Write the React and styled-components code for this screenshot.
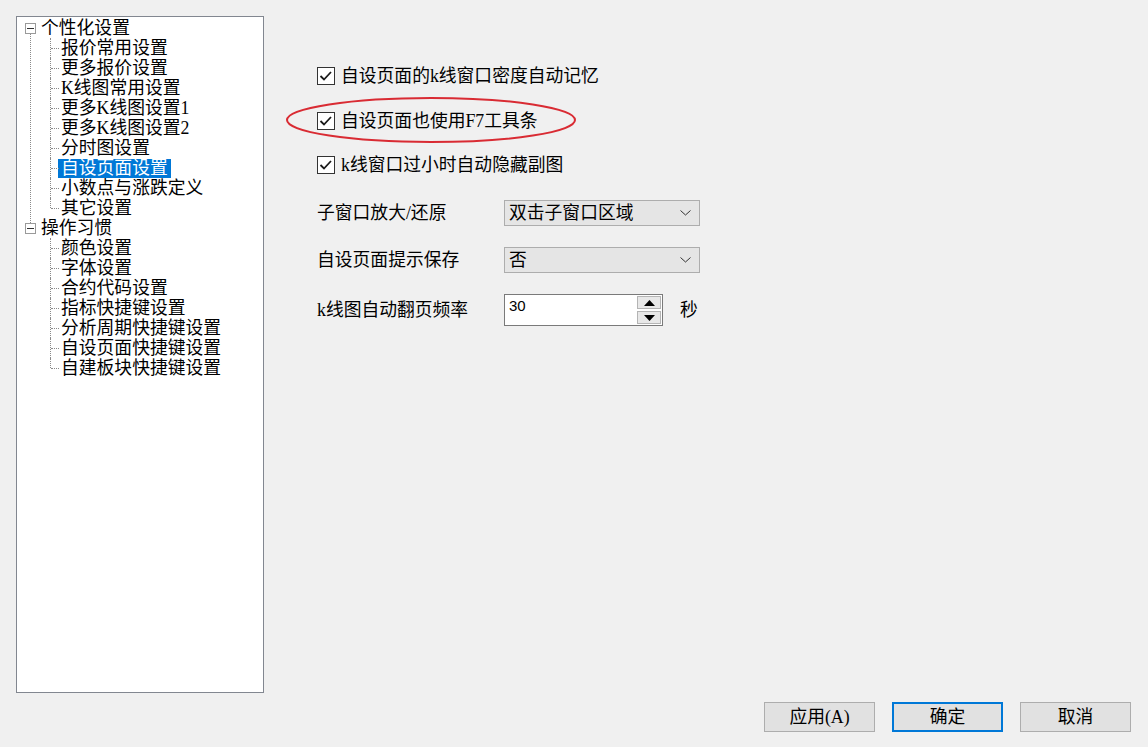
import React from "react";
import styled, { createGlobalStyle } from "styled-components";

const FONT = `"Liberation Serif", "Noto Sans CJK SC", serif`;

const GlobalStyle = createGlobalStyle`
  html, body {
    margin: 0;
    padding: 0;
    background: #f0f0f0;
  }
  * {
    box-sizing: border-box;
  }
`;

const groups = [
  {
    label: "个性化设置",
    children: [
      "报价常用设置",
      "更多报价设置",
      "K线图常用设置",
      "更多K线图设置1",
      "更多K线图设置2",
      "分时图设置",
      "自设页面设置",
      "小数点与涨跌定义",
      "其它设置",
    ],
  },
  {
    label: "操作习惯",
    children: [
      "颜色设置",
      "字体设置",
      "合约代码设置",
      "指标快捷键设置",
      "分析周期快捷键设置",
      "自设页面快捷键设置",
      "自建板块快捷键设置",
    ],
  },
];

const checks = [
  { label: "自设页面的k线窗口密度自动记忆", height: 44 },
  { label: "自设页面也使用F7工具条", height: 45, marked: true },
  { label: "k线窗口过小时自动隐藏副图", height: 44 },
];

const CheckMark = () => (
  <svg width="16" height="16" viewBox="0 0 16 16">
    <polyline
      points="2.5,8 6,11.5 13,4"
      fill="none"
      stroke="#1a1a1a"
      strokeWidth="1.8"
    />
  </svg>
);

const Chevron = () => (
  <svg width="11" height="6" viewBox="0 0 11 6">
    <polyline points="0.5,0.5 5.5,5 10.5,0.5" fill="none" stroke="#333" strokeWidth="1" />
  </svg>
);

const Tri = ({ up }) => (
  <svg width="11" height="6" viewBox="0 0 11 6">
    <polygon points={up ? "0,6 11,6 5.5,0" : "0,0 11,0 5.5,6"} fill="#000" />
  </svg>
);

const App = () => {
  const selected = "自设页面设置";
  return (
    <Window>
      <GlobalStyle />
      <Main>
        <TreePanel>
          <TreeList>
            {groups.map((g) => (
              <RootNode key={g.label}>
                <RootRow>
                  <Expander />
                  <RootLabel>{g.label}</RootLabel>
                </RootRow>
                <ChildList>
                  {g.children.map((c) => (
                    <ChildItem key={c}>
                      <ItemLabel $active={c === selected}>{c}</ItemLabel>
                    </ChildItem>
                  ))}
                </ChildList>
              </RootNode>
            ))}
          </TreeList>
        </TreePanel>
        <Content>
          <CheckGroup>
            {checks.map((c) => (
              <CheckRow key={c.label} $h={c.height}>
                {c.marked && (
                  <Ellipse width="292" height="48" viewBox="0 0 292 48">
                    <ellipse cx="146" cy="24" rx="144" ry="22" fill="none" stroke="#d92b33" strokeWidth="2" />
                  </Ellipse>
                )}
                <Box>
                  <CheckMark />
                </Box>
                <CheckText>{c.label}</CheckText>
              </CheckRow>
            ))}
          </CheckGroup>
          <FormGrid>
            <FieldLabel>子窗口放大/还原</FieldLabel>
            <Select>
              <span>双击子窗口区域</span>
              <Chevron />
            </Select>
            <FieldLabel>自设页面提示保存</FieldLabel>
            <Select>
              <span>否</span>
              <Chevron />
            </Select>
            <FieldLabel>k线图自动翻页频率</FieldLabel>
            <SpinCell>
              <Spin>
                <SpinValue>30</SpinValue>
                <SpinButtons>
                  <SpinButton>
                    <Tri up />
                  </SpinButton>
                  <SpinButton>
                    <Tri />
                  </SpinButton>
                </SpinButtons>
              </Spin>
              <Unit>秒</Unit>
            </SpinCell>
          </FormGrid>
        </Content>
      </Main>
      <Footer>
        <Button>应用(A)</Button>
        <Button $primary>确定</Button>
        <Button>取消</Button>
      </Footer>
    </Window>
  );
};

export default App;

const Window = styled.div`
  width: 1148px;
  height: 747px;
  background: #f0f0f0;
  display: flex;
  flex-direction: column;
  font-family: ${FONT};
  font-size: 17.8px;
  color: #000;
  overflow: hidden;
`;

const Main = styled.div`
  display: flex;
  padding: 16px 0 0 16px;
`;

const TreePanel = styled.div`
  width: 248px;
  height: 677px;
  background: #fff;
  border: 1px solid #828790;
  padding-top: 1px;
`;

const TreeList = styled.ul`
  list-style: none;
  margin: 0;
  padding: 0;
`;

const RootNode = styled.li`
  position: relative;
  &:not(:last-child)::before {
    content: "";
    position: absolute;
    left: 13px;
    top: 16px;
    bottom: -5px;
    border-left: 1px dotted #8a8a8a;
  }
`;

const RootRow = styled.div`
  height: 20px;
  display: flex;
  align-items: center;
  padding-left: 8px;
`;

const Expander = styled.span`
  position: relative;
  width: 11px;
  height: 11px;
  border: 1px solid #9a9a9a;
  background: #fff;
  flex-shrink: 0;
  &::after {
    content: "";
    position: absolute;
    left: 1px;
    right: 1px;
    top: 4px;
    border-top: 1px solid #333;
  }
`;

const RootLabel = styled.span`
  margin-left: 5px;
  line-height: 20px;
  white-space: nowrap;
`;

const ChildList = styled.ul`
  list-style: none;
  margin: 0;
  padding: 0;
`;

const ChildItem = styled.li`
  position: relative;
  height: 20px;
  padding-left: 41px;
  display: flex;
  align-items: center;
  &::before {
    content: "";
    position: absolute;
    left: 33px;
    top: 0;
    bottom: 0;
    border-left: 1px dotted #8a8a8a;
  }
  &:last-child::before {
    bottom: 10px;
  }
  &::after {
    content: "";
    position: absolute;
    left: 34px;
    top: 10px;
    width: 8px;
    border-top: 1px dotted #8a8a8a;
  }
`;

const ItemLabel = styled.span`
  display: inline-block;
  height: 19px;
  line-height: 19px;
  padding: 0 3px;
  white-space: nowrap;
  background: ${(p) => (p.$active ? "#0078d7" : "transparent")};
  color: ${(p) => (p.$active ? "#fff" : "#000")};
`;

const Content = styled.div`
  flex: 1;
  padding: 38px 0 0 53px;
`;

const CheckGroup = styled.div`
  display: flex;
  flex-direction: column;
`;

const CheckRow = styled.div`
  position: relative;
  height: ${(p) => p.$h}px;
  display: flex;
  align-items: center;
`;

const Ellipse = styled.svg`
  position: absolute;
  left: -32px;
  top: -2px;
  pointer-events: none;
`;

const Box = styled.span`
  width: 18px;
  height: 18px;
  border: 1px solid #333;
  background: #fff;
  display: flex;
  align-items: center;
  justify-content: center;
  flex-shrink: 0;
`;

const CheckText = styled.span`
  margin-left: 6px;
  line-height: 20px;
  white-space: nowrap;
`;

const FormGrid = styled.div`
  margin-top: 13px;
  display: grid;
  grid-template-columns: 187px 196px;
  grid-template-rows: 26px 26px 32px;
  row-gap: 21px;
  align-items: center;
`;

const FieldLabel = styled.span`
  white-space: nowrap;
  line-height: 20px;
`;

const Select = styled.div`
  height: 100%;
  background: #e5e5e5;
  border: 1px solid #adadad;
  display: flex;
  align-items: center;
  justify-content: space-between;
  padding: 0 8px 0 4px;
  white-space: nowrap;
  line-height: 20px;
`;

const SpinCell = styled.div`
  display: flex;
  align-items: center;
  height: 100%;
`;

const Spin = styled.div`
  width: 159px;
  height: 32px;
  flex-shrink: 0;
  background: #fff;
  border: 1px solid #7a7a7a;
  display: flex;
  justify-content: space-between;
  padding: 1px 1px 1px 4px;
`;

const SpinValue = styled.span`
  font-family: "Liberation Sans", Arial, sans-serif;
  font-size: 15px;
  line-height: 18px;
  padding-top: 1px;
`;

const SpinButtons = styled.div`
  display: flex;
  flex-direction: column;
  gap: 2px;
`;

const SpinButton = styled.span`
  width: 24px;
  height: 13px;
  background: #e8e8e8;
  border: 1px solid #b4b4b4;
  display: flex;
  align-items: center;
  justify-content: center;
`;

const Unit = styled.span`
  margin-left: 17px;
  line-height: 20px;
  white-space: nowrap;
`;

const Footer = styled.div`
  margin-top: 9px;
  display: flex;
  justify-content: flex-end;
  gap: 17px;
  padding-right: 17px;
`;

const Button = styled.button`
  width: 111px;
  height: 30px;
  background: #e1e1e1;
  border: ${(p) => (p.$primary ? "2px solid #0078d7" : "1px solid #adadad")};
  font-family: ${FONT};
  font-size: 17.8px;
  color: #000;
  padding: 0;
  line-height: 20px;
`;
